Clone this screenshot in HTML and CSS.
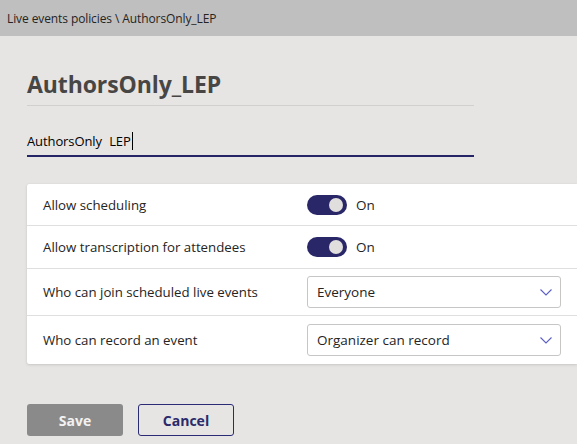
FILE: index.html
```html
<!DOCTYPE html>
<html lang="en">
<head>
<meta charset="utf-8">
<title>AuthorsOnly_LEP</title>
<link rel="stylesheet" href="styles.css">
</head>
<body>
<div class="breadcrumb">Live events policies \ AuthorsOnly_LEP</div>
<main class="content">
  <h1 class="title">AuthorsOnly_LEP</h1>
  <div class="name-field"><span class="name-text">AuthorsOnly LEP</span><span class="caret"></span></div>
  <section class="card">
    <div class="row">
      <span class="label">Allow scheduling</span>
      <span class="toggle-wrap"><span class="toggle"><span class="knob"></span></span><span class="state">On</span></span>
    </div>
    <div class="row">
      <span class="label">Allow transcription for attendees</span>
      <span class="toggle-wrap"><span class="toggle"><span class="knob"></span></span><span class="state">On</span></span>
    </div>
    <div class="row row-select">
      <span class="label">Who can join scheduled live events</span>
      <span class="select"><span class="select-text">Everyone</span><svg class="chevron" width="12" height="7" viewBox="0 0 12 7"><path d="M0.5 0.5 L6 6 L11.5 0.5" fill="none" stroke="#5b5fc7" stroke-width="1.1"/></svg></span>
    </div>
    <div class="row row-select">
      <span class="label">Who can record an event</span>
      <span class="select"><span class="select-text">Organizer can record</span><svg class="chevron" width="12" height="7" viewBox="0 0 12 7"><path d="M0.5 0.5 L6 6 L11.5 0.5" fill="none" stroke="#5b5fc7" stroke-width="1.1"/></svg></span>
    </div>
  </section>
  <div class="actions">
    <button class="btn btn-save" type="button">Save</button>
    <button class="btn btn-cancel" type="button">Cancel</button>
  </div>
</main>
</body>
</html>
```
FILE: styles.css
```css
* { box-sizing: border-box; }
html, body {
  margin: 0;
  padding: 0;
  width: 577px;
  height: 444px;
  overflow: hidden;
  background: #e6e5e4;
  font-family: "Open Sans", "Noto Sans", sans-serif;
  color: #252423;
}
.breadcrumb {
  height: 36px;
  background: #bfbfbf;
  padding-left: 7px;
  display: flex;
  align-items: center;
  font-size: 12px;
  color: #252423;
  letter-spacing: -0.1px;
}
.content {
  padding-left: 27px;
}
.title {
  margin: 0;
  padding-top: 30px;
  width: 447px;
  font-size: 23px;
  line-height: 36px;
  font-weight: 700;
  color: #484644;
  letter-spacing: -0.1px;
  border-bottom: 1px solid #d2d0ce;
  padding-bottom: 3px;
}
.name-field {
  width: 447px;
  margin-top: 20px;
  height: 31px;
  border-bottom: 2px solid #252466;
  display: flex;
  align-items: center;
  font-size: 13px;
  letter-spacing: -0.1px;
  color: #000;
}
.name-text { word-spacing: 4px; }
.caret {
  display: inline-block;
  width: 1px;
  height: 18px;
  background: #000;
  margin-left: 1px;
}
.card {
  margin-top: 27px;
  width: 550px;
  background: #fff;
  box-shadow: 0 1px 3px rgba(0,0,0,0.13), 0 0 1px rgba(0,0,0,0.1);
  border-radius: 2px 0 0 2px;
}
.row {
  display: grid;
  grid-template-columns: 264px 254px;
  align-items: center;
  padding: 11px 16px;
  height: 42px;
  border-bottom: 1px solid #e1dfdd;
  font-size: 13.25px;
}
.row:nth-child(2) { height: 43px; }
.row-select { height: 47px; padding: 7px 16px; }
.row-select:last-child { height: 48px; border-bottom: none; }
.toggle-wrap {
  display: flex;
  align-items: center;
  gap: 9px;
}
.toggle {
  width: 40px;
  height: 20px;
  border-radius: 10px;
  background: #292768;
  display: flex;
  align-items: center;
  justify-content: flex-end;
  padding-right: 4px;
}
.knob {
  width: 14px;
  height: 14px;
  border-radius: 50%;
  background: #e1dfdd;
}
.state { font-size: 13.5px; }
.select {
  height: 32px;
  width: 254px;
  border: 1px solid #c8c6c4;
  border-radius: 3px;
  display: flex;
  align-items: center;
  justify-content: space-between;
  padding: 0 8px 0 9px;
  font-size: 13.5px;
  color: #252423;
}
.chevron { display: block; }
.actions {
  display: flex;
  gap: 15px;
  margin-top: 40px;
}
.btn {
  width: 96px;
  height: 32px;
  border-radius: 3px;
  font-family: "Open Sans", "Noto Sans", sans-serif;
  font-size: 14px;
  font-weight: 700;
  padding: 0;
}
.btn-save {
  background: #8a8a8a;
  border: none;
  color: #f3f2f1;
}
.btn-cancel {
  background: transparent;
  border: 1.5px solid #2b2a75;
  color: #2b2a6b;
}
```
